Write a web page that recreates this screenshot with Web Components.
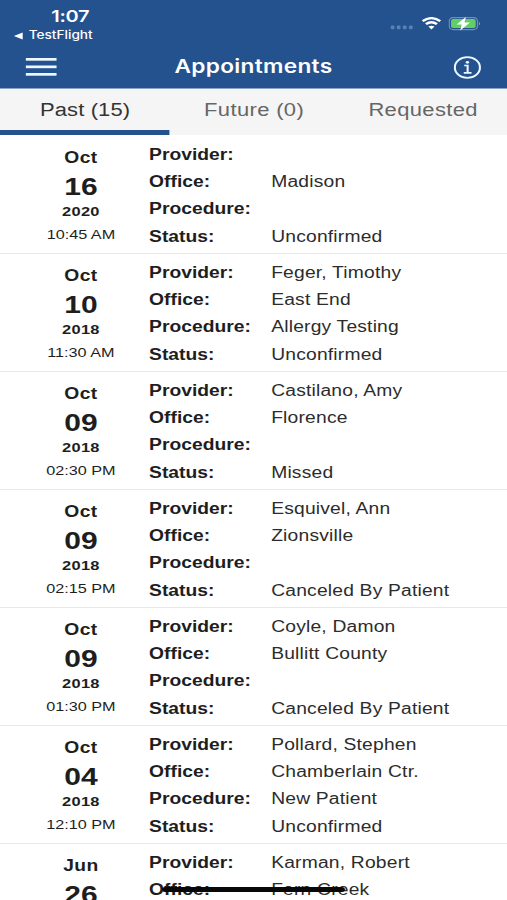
<!DOCTYPE html>
<html lang="en">
<head>
<meta charset="utf-8">
<title>Appointments</title>
<style>
  html, body { margin: 0; height: 100%; overflow: hidden; background: #fff; }
</style>
</head>
<body>
<appointments-app></appointments-app>

<script>
const define = (name, html, setup) => {
  const template = document.createElement('template')
  template.innerHTML = html

  window.customElements.define(name, class extends HTMLElement {
    constructor () {
      super()
      this.attachShadow({ mode: 'open' })
      this.shadowRoot.appendChild(template.content.cloneNode(true))
    }

    connectedCallback () {
      if (setup) setup(this, this.shadowRoot)
    }
  })
}

define('status-bar', `
  <style>
    :host {
      display: flex;
      justify-content: space-between;
      height: 44px;
      color: #fff;
      font-family: Inter, sans-serif;
    }
    .left { padding: 7px 0 0 11px; }
    .time {
      padding-left: 31px;
      font-size: 16.4px;
      font-weight: 600;
      line-height: 19px;
      letter-spacing: -0.2px;
    }
    .back {
      display: flex;
      align-items: center;
      gap: 4.5px;
      font-size: 11.2px;
      font-weight: 500;
      line-height: 19px;
      letter-spacing: 0;
    }
    .right {
      display: flex;
      align-items: flex-start;
      gap: 6.5px;
      padding: 17px 21px 0 0;
    }
    svg { display: block; }
    .dots { margin-top: 8px; }
  </style>
  <div class="left">
    <div class="time">1:07</div>
    <div class="back">
      <svg width="8" height="8" viewBox="0 0 8 8"><path d="M0.4 4 7.6 0.5v7z" fill="#fff"/></svg>
      <span>TestFlight</span>
    </div>
  </div>
  <div class="right">
    <svg class="dots" width="19" height="5" viewBox="0 0 19 5" fill="#5b80b2">
      <rect x="0.6" y="0.6" width="3" height="3.6" rx="1"/>
      <rect x="5.6" y="0.6" width="3" height="3.6" rx="1"/>
      <rect x="10.6" y="0.6" width="3" height="3.6" rx="1"/>
      <rect x="15.6" y="0.6" width="3" height="3.6" rx="1"/>
    </svg>
    <svg width="16" height="13" viewBox="0 0 16 13" fill="none" stroke="#fff" stroke-width="2.3">
      <path d="M0.8 4.2Q8 -1.9 15.2 4.2"/>
      <path d="M3.5 7.2Q8 3.3 12.5 7.2"/>
      <path d="M5.5 9.6Q8 7.7 10.5 9.6L8 12.4z" fill="#fff" stroke="none"/>
    </svg>
    <svg width="27" height="14" viewBox="0 0 27 14">
      <rect x="0.6" y="0.6" width="23.2" height="12" rx="3.3" fill="none" stroke="#6d91ad" stroke-width="1.1"/>
      <path d="M25 4.7q1.8 1.9 0 3.8z" fill="#7f9fc2"/>
      <rect x="2.1" y="2.1" width="20.2" height="9" rx="1.8" fill="#63cf63"/>
      <path d="M14.3 0 6.6 7.6h4.3L9.6 13.4 17.6 5.6h-4.5z" fill="#fff"/>
    </svg>
  </div>
`)

define('nav-bar', `
  <style>
    :host {
      display: grid;
      grid-template-columns: 70px 1fr 70px;
      align-items: center;
      box-sizing: border-box;
      height: 45px;
      border-bottom: 1px solid #88a3c5;
      color: #fff;
    }
    h1 {
      margin: 0;
      text-align: center;
      font: 600 18.6px/45px Inter, sans-serif;
      letter-spacing: 0.25px;
    }
    svg { display: block; }
    .menu { margin: 1px 0 0 20.5px; }
    .info { margin: 2px 21.5px 0 auto; }
  </style>
  <svg class="menu" width="26" height="20" viewBox="0 0 26 20" fill="#edf7ff">
    <rect y="1" width="25.4" height="2.7"/>
    <rect y="8.5" width="25.4" height="2.7"/>
    <rect y="16" width="25.4" height="2.7"/>
  </svg>
  <h1><slot></slot></h1>
  <svg class="info" width="23" height="23" viewBox="0 0 23 23" fill="none" stroke="#edf7ff" stroke-width="1.7">
    <circle cx="11.5" cy="11.5" r="10.3"/>
    <path d="M8.9 9.5h2.8v7.3M8.5 16.8h6.4"/>
    <circle cx="11.5" cy="6.3" r="1.4" fill="#edf7ff" stroke="none"/>
  </svg>
`)

define('tab-item', `
  <style>
    :host {
      display: block;
      box-sizing: border-box;
      height: 46px;
      padding-left: 1px;
      border-bottom: 5px solid transparent;
      color: #666;
      text-align: center;
      font-size: 18px;
      line-height: 42px;
      letter-spacing: 0.3px;
    }
    :host([active]) {
      border-color: #24528f;
      color: #333;
      letter-spacing: 0.1px;
    }
  </style>
  <slot></slot>
`)

define('tab-bar', `
  <style>
    :host {
      display: grid;
      grid-template-columns: repeat(3, 1fr);
      height: 46px;
      background: #f5f5f5;
    }
  </style>
  <slot></slot>
`)

define('appointment-row', `
  <style>
    :host {
      display: grid;
      grid-template-columns: 122.3px 1fr;
      box-sizing: border-box;
      height: 118px;
      border-bottom: 1px solid #e9e9e9;
      color: #1e1e1e;
    }
    .date {
      padding: 10px 0 0 10.5px;
      text-align: center;
      font-weight: bold;
    }
    .month { font-size: 15.8px; line-height: 24px; letter-spacing: 0.3px; }
    .day { font-size: 24.6px; line-height: 33px; }
    .year { font-size: 13.5px; line-height: 17px; letter-spacing: 0.2px; }
    .time { font-size: 13.3px; line-height: 30px; font-weight: normal; }
    dl {
      display: grid;
      grid-template-columns: 100.2px 1fr;
      grid-auto-rows: 27.2px;
      margin: 0;
      padding-top: 5px;
      font-size: 15.8px;
      line-height: 27px;
      white-space: nowrap;
    }
    dt { font-weight: bold; letter-spacing: 0.02px; }
    dd { margin: 0; color: #2c2c2c; letter-spacing: 0.16px; }
  </style>
  <div class="date">
    <div class="month"></div>
    <div class="day"></div>
    <div class="year"></div>
    <div class="time"></div>
  </div>
  <dl>
    <dt>Provider:</dt><dd class="provider"></dd>
    <dt>Office:</dt><dd class="office"></dd>
    <dt>Procedure:</dt><dd class="procedure"></dd>
    <dt>Status:</dt><dd class="status"></dd>
  </dl>
`, (el, root) => {
  const fields = ['month', 'day', 'year', 'time', 'provider', 'office', 'procedure', 'status']
  fields.forEach(field => {
    root.querySelector('.' + field).textContent = el.getAttribute(field) || ''
  })
})

// The screen is laid out 416px wide and stretched to the 507px window.
define('appointments-app', `
  <style>
    :host {
      display: block;
      position: relative;
      width: 416px;
      height: 900px;
      overflow: hidden;
      background: #fff;
      font-family: "Liberation Sans", Arial, sans-serif;
      transform: scaleX(1.21875);
      transform-origin: 0 0;
    }
    header { background: #24528f; }
    main { padding-top: 1px; }
    .home {
      position: absolute;
      left: 133px;
      bottom: 8.5px;
      width: 150px;
      height: 5px;
      border-radius: 3px;
      background: #080808;
    }
  </style>
  <header>
    <status-bar></status-bar>
    <nav-bar>Appointments</nav-bar>
  </header>
  <tab-bar>
    <tab-item active>Past (15)</tab-item>
    <tab-item>Future (0)</tab-item>
    <tab-item>Requested</tab-item>
  </tab-bar>
  <main>
    <appointment-row month="Oct" day="16" year="2020" time="10:45 AM" office="Madison" status="Unconfirmed"></appointment-row>
    <appointment-row month="Oct" day="10" year="2018" time="11:30 AM" provider="Feger, Timothy" office="East End" procedure="Allergy Testing" status="Unconfirmed"></appointment-row>
    <appointment-row month="Oct" day="09" year="2018" time="02:30 PM" provider="Castilano, Amy" office="Florence" status="Missed"></appointment-row>
    <appointment-row month="Oct" day="09" year="2018" time="02:15 PM" provider="Esquivel, Ann" office="Zionsville" status="Canceled By Patient"></appointment-row>
    <appointment-row month="Oct" day="09" year="2018" time="01:30 PM" provider="Coyle, Damon" office="Bullitt County" status="Canceled By Patient"></appointment-row>
    <appointment-row month="Oct" day="04" year="2018" time="12:10 PM" provider="Pollard, Stephen" office="Chamberlain Ctr." procedure="New Patient" status="Unconfirmed"></appointment-row>
    <appointment-row month="Jun" day="26" provider="Karman, Robert" office="Fern Creek"></appointment-row>
  </main>
  <div class="home"></div>
`)
</script>
</body>
</html>
